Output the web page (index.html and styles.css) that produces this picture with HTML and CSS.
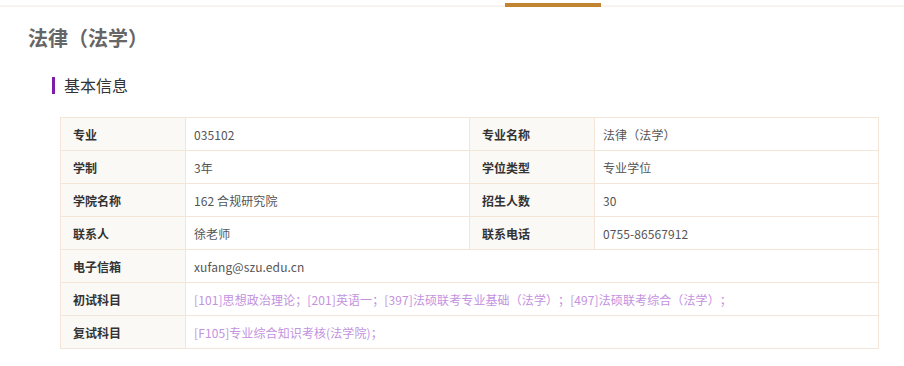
FILE: index.html
```html
<!DOCTYPE html>
<html lang="zh">
<head>
<meta charset="utf-8">
<link rel="stylesheet" href="styles.css">
</head>
<body>
<div class="topbar"><div class="topbar-active"></div></div>
<div class="page">
  <h1 class="title">法律（法学）</h1>
  <h2 class="section">基本信息</h2>
  <table class="info">
    <colgroup>
      <col class="c-label"><col class="c-value"><col class="c-label"><col>
    </colgroup>
    <tr><th>专业</th><td>035102</td><th>专业名称</th><td>法律（法学）</td></tr>
    <tr><th>学制</th><td>3年</td><th>学位类型</th><td>专业学位</td></tr>
    <tr><th>学院名称</th><td>162 合规研究院</td><th>招生人数</th><td>30</td></tr>
    <tr><th>联系人</th><td>徐老师</td><th>联系电话</th><td>0755-86567912</td></tr>
    <tr><th>电子信箱</th><td colspan="3">xufang@szu.edu.cn</td></tr>
    <tr><th>初试科目</th><td colspan="3" class="subj">[101]思想政治理论；[201]英语一；[397]法硕联考专业基础（法学）；[497]法硕联考综合（法学）；</td></tr>
    <tr><th>复试科目</th><td colspan="3" class="subj">[F105]专业综合知识考核(法学院)；</td></tr>
  </table>
</div>
</body>
</html>
```
FILE: styles.css
```css
* { box-sizing: border-box; }
body {
  margin: 0;
  background: #fff;
  font-family: "Microsoft YaHei", "Noto Sans CJK SC", "Noto Sans", sans-serif;
  color: #555;
  text-spacing-trim: space-all;
}
.topbar {
  margin-top: 5px;
  height: 2px;
  background: #f7f3ef;
  position: relative;
}
.topbar-active {
  position: absolute;
  left: 505px;
  top: -2px;
  width: 96px;
  height: 4px;
  background: #c08433;
}
.page {
  padding: 0 0 0 28px;
}
.title {
  margin: 17px 0 0 0;
  font-size: 20px;
  line-height: 28px;
  font-weight: bold;
  color: #666;
}
.section {
  margin: 25px 0 0 24px;
  padding-left: 9px;
  border-left: 3px solid #7d1fa6;
  font-size: 16px;
  line-height: 17px;
  font-weight: normal;
  color: #333;
}
.info {
  margin: 23px 0 0 32px;
  width: 819px;
  border-collapse: collapse;
  table-layout: fixed;
  font-size: 12px;
}
.c-label { width: 125px; }
.c-value { width: 284px; }
.info th, .info td {
  border: 1px solid #f3e6d8;
  height: 33px;
  padding: 0 8px;
  text-align: left;
  vertical-align: middle;
  white-space: nowrap;
}
.info th {
  background: #fbf9f6;
  color: #333;
  font-weight: bold;
  padding-left: 12px;
}
.info td { color: #555; letter-spacing: 0.1px; }
.info td.subj { color: #c392e0; }
```
